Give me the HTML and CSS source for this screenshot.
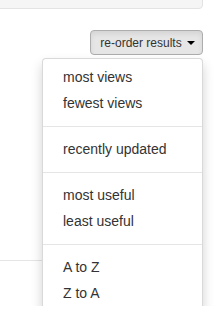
FILE: index.html
```html
<!DOCTYPE html>
<html lang="en">
<head>
    <meta charset="UTF-8">
    <meta name="viewport" content="width=device-width, initial-scale=1.0">
    <title>Results</title>
    <link rel="stylesheet" href="styles.css">
</head>
<body>
    <div class="page">
        <div class="well"></div>

        <div class="toolbar">
            <div class="dropdown">
                <button class="btn" type="button">re-order results <span class="caret"></span></button>
                <ul class="dropdown-menu">
                    <li><a href="#">most views</a></li>
                    <li><a href="#">fewest views</a></li>
                    <li class="divider"></li>
                    <li><a href="#">recently updated</a></li>
                    <li class="divider"></li>
                    <li><a href="#">most useful</a></li>
                    <li><a href="#">least useful</a></li>
                    <li class="divider"></li>
                    <li><a href="#">A to Z</a></li>
                    <li><a href="#">Z to A</a></li>
                </ul>
            </div>
        </div>

        <hr class="results-rule">
    </div>
</body>
</html>
```

FILE: styles.css
```css
* {
    box-sizing: border-box;
}

body {
    margin: 0;
    padding: 0;
    background-color: #fff;
    color: #333;
    font-family: 'Liberation Sans', Arial, sans-serif;
    font-size: 14px;
    line-height: 20px;
    overflow: hidden;
}

.page {
    min-height: 100vh;
    padding-right: 21px;
}

.well {
    height: 29px;
    margin: -20px 0 0 -10px;
    background-color: #f5f5f5;
    border: 1px solid #e3e3e3;
    border-radius: 4px;
}

.toolbar {
    display: flex;
    justify-content: flex-end;
    margin-top: 21px;
}

.dropdown {
    position: relative;
}

.btn {
    display: block;
    height: 25px;
    padding: 2px 7px 2px 9px;
    font-family: inherit;
    font-size: 12px;
    line-height: 18px;
    color: #333;
    background-color: #e6e6e6;
    border: 1px solid #adadad;
    border-radius: 4px;
    box-shadow: inset 0 3px 5px rgba(0, 0, 0, 0.08);
    cursor: pointer;
}

.caret {
    display: inline-block;
    width: 0;
    height: 0;
    margin-left: 2px;
    vertical-align: middle;
    border-top: 4px solid #000;
    border-left: 4px solid transparent;
    border-right: 4px solid transparent;
}

.dropdown-menu {
    position: absolute;
    top: 100%;
    right: 0;
    z-index: 10;
    min-width: 161px;
    margin: 3px 0 0;
    padding: 5px 0;
    list-style: none;
    background-color: #fff;
    border: 1px solid rgba(0, 0, 0, 0.15);
    border-radius: 4px;
    box-shadow: 0 6px 12px rgba(0, 0, 0, 0.175);
}

.dropdown-menu a {
    display: block;
    padding: 3px 20px;
    line-height: 20px;
    color: #333;
    text-decoration: none;
    white-space: nowrap;
}

.dropdown-menu .divider {
    height: 1px;
    margin: 10px 0 9px;
    background-color: #e5e5e5;
}

.results-rule {
    margin: 205px 0 0;
    border: 0;
    border-top: 1px solid #e5e5e5;
}
```
